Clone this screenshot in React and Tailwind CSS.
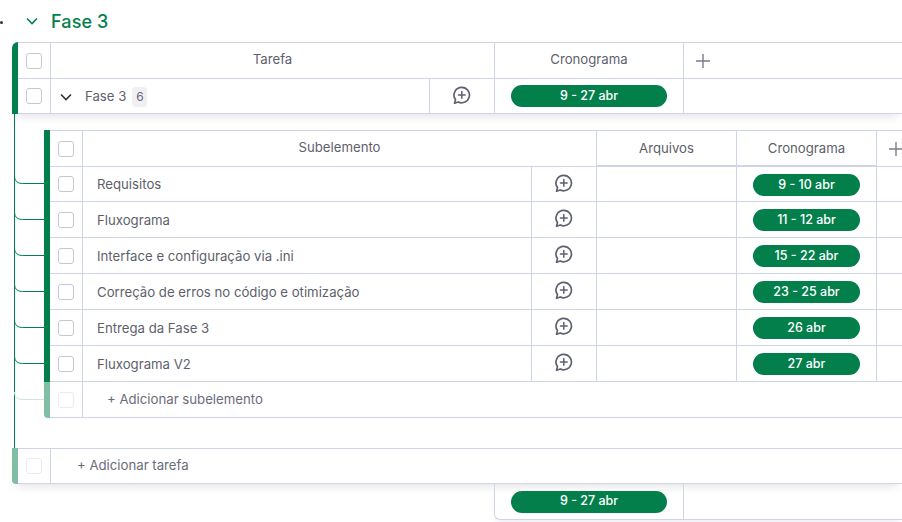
const font = { fontFamily: '"Inter", "Liberation Sans", sans-serif' };
const B = 'border-[#d0d4e7]';

function Check({ faded }) {
  return <span className={`block w-4 h-4 rounded-[3px] border ${faded ? 'border-[#e9ebf2]' : 'border-[#c5c7d6]'} bg-white`} />;
}
function CheckCell({ faded }) {
  return <div className={`w-[33px] shrink-0 flex items-center justify-center border-r ${B} pr-px`}><Check faded={faded} /></div>;
}
function Bubble() {
  return (
    <svg className="mr-[2px] mb-[2px]" width="19" height="19" viewBox="0 0 18 18" fill="none" stroke="#5f6070" strokeWidth="1.6" strokeLinecap="round" strokeLinejoin="round">
      <path d="M9.3 1.3a7.3 7.3 0 1 1 -3.4 13.8l-3.5 1.2 0.9 -3.4a7.3 7.3 0 0 1 6 -11.6z" />
      <path d="M9.3 5.3v6.4M6.1 8.5h6.4" strokeWidth="1.4" />
    </svg>
  );
}
function Plus({ size = 14 }) {
  return (
    <svg width={size} height={size} viewBox="0 0 14 14" stroke="#7b7c8a" strokeWidth="1.4"><path d="M7 0v14M0 7h14" /></svg>
  );
}
function Pill({ w, children }) {
  return <span className={`${w} h-[22px] rounded-full bg-[#037f4c] text-white text-[12.5px] font-medium flex items-center justify-center`}>{children}</span>;
}
function SubRow({ label, date, first }) {
  return (
    <div className={`flex ${first ? 'h-[35px]' : 'h-[36px]'} border-b ${B}`}>
      <CheckCell />
      <div className={`w-[449px] shrink-0 flex items-center pl-[14px] pt-[2px] text-[13.2px] text-[#5e5f6c] border-r ${B}`}>{label}</div>
      <div className={`w-[65px] shrink-0 flex items-center justify-center border-r ${B}`}><Bubble /></div>
      <div className={`w-[140px] shrink-0 border-r ${B}`} />
      <div className={`w-[140px] shrink-0 flex items-center justify-center border-r ${B} ${first ? 'pt-[2px]' : 'pt-px'}`}><Pill w="w-[107px]">{date}</Pill></div>
      <div className="flex-1" />
    </div>
  );
}
const rows = [
  ['Requisitos', '9 - 10 abr'],
  ['Fluxograma', '11 - 12 abr'],
  ['Interface e configuração via .ini', '15 - 22 abr'],
  ['Correção de erros no código e otimização', '23 - 25 abr'],
  ['Entrega da Fase 3', '26 abr'],
  ['Fluxograma V2', '27 abr'],
];

export default function App() {
  return (
    <div style={font} className="relative w-[902px] h-[522px] overflow-hidden bg-white flex flex-col">
      <svg className="absolute left-0 top-0" width="50" height="460" fill="none" stroke="#037f4c" strokeWidth="1">
        <path d="M14.5 113V448" />
        {[183, 219, 255, 291, 327, 363].map((y) => (
          <path key={y} d={`M14.5 ${y - 7}q0 7.5 8 7.5H44`} />
        ))}
        <path d="M14.5 392q0 7.5 8 7.5H44" stroke="#cfe5da" />
      </svg>

      <div className="h-[42px] shrink-0 flex items-center relative">
        <span className="absolute left-0 top-[21px] w-[3px] h-[3px] rounded-full bg-[#323338]" />
        <svg className="ml-[26px]" width="12" height="8" viewBox="0 0 12 8" fill="none" stroke="#037f4c" strokeWidth="1.6"><path d="M1 1.5l5 5 5-5" /></svg>
        <span className="ml-[13px] text-[18px] font-medium tracking-[0.1px] text-[#037f4c]">Fase 3</span>
      </div>

      <div className="ml-[12px] relative shadow-[0_6px_10px_-4px_rgba(0,0,0,0.12)]">
        <div className="border-l-[6px] border-[#037f4c] rounded-tl-[6px]">
          <div className={`flex h-[37px] border-y ${B} text-[13.2px] text-[#5e5f6c]`}>
            <CheckCell />
            <div className={`w-[444px] shrink-0 flex items-center justify-center border-r ${B} pb-[2px]`}>Tarefa</div>
            <div className={`w-[189px] shrink-0 flex items-center justify-center border-r ${B} pb-[2px]`}>Cronograma</div>
            <div className="flex-1 flex items-center pl-[12px]"><Plus /></div>
          </div>
          <div className={`flex h-[35px] border-b ${B}`}>
            <CheckCell />
            <div className={`w-[379px] shrink-0 flex items-center pt-[2px] border-r ${B}`}>
              <svg className="ml-[9px]" width="12" height="8" viewBox="0 0 12 8" fill="none" stroke="#323338" strokeWidth="1.6"><path d="M1 1.5l5 5 5-5" /></svg>
              <span className="ml-[13px] text-[13.2px] text-[#5e5f6c]">Fase 3</span>
              <span className="ml-[6px] w-[15px] h-[20px] rounded-[4px] bg-[#f0f0f2] text-[12px] text-[#676879] flex items-center justify-center">6</span>
            </div>
            <div className={`w-[65px] shrink-0 flex items-center justify-center border-r ${B}`}><Bubble /></div>
            <div className={`w-[189px] shrink-0 flex items-center justify-center border-r ${B}`}><Pill w="w-[156px]">9 - 27 abr</Pill></div>
            <div className="flex-1" />
          </div>
        </div>
      </div>

      <div className="ml-[44px] mt-[16px] relative">
        <div className="border-l-[6px] border-[#037f4c]">
          <div className={`flex h-[37px] border-y ${B} text-[13.2px] text-[#5e5f6c]`}>
            <CheckCell />
            <div className={`w-[514px] shrink-0 flex items-center justify-center border-r ${B} pb-[2px]`}>Subelemento</div>
            <div className={`w-[140px] shrink-0 flex items-center justify-center pt-[2px] border-r border-b-2 -mb-px ${B}`}>Arquivos</div>
            <div className={`w-[140px] shrink-0 flex items-center justify-center pt-[2px] border-r border-b-2 -mb-px ${B}`}>Cronograma</div>
            <div className="flex-1 flex items-center pl-[12px]"><Plus /></div>
          </div>
          {rows.map(([l, d], i) => <SubRow key={l} label={l} date={d} first={i === 0} />)}
        </div>
        <div className="flex h-[36px] border-l-[6px] border-[#80bfa5] rounded-bl-[4px]">
          <div className={`flex flex-1 border-b ${B}`}>
            <CheckCell faded />
            <div className="flex items-center pl-[24px] text-[13.2px] text-[#6b6c7b]">+ Adicionar subelemento</div>
          </div>
        </div>
      </div>

      <div className="ml-[12px] mt-[30px] shadow-[0_6px_10px_-4px_rgba(0,0,0,0.12)]">
        <div className="flex h-[36px] border-l-[6px] border-[#80bfa5] rounded-bl-[4px]">
          <div className={`flex flex-1 border-y ${B}`}>
            <CheckCell faded />
            <div className="flex items-center pl-[26px] text-[13.2px] text-[#6b6c7b]">+ Adicionar tarefa</div>
          </div>
        </div>
      </div>

      <div className={`ml-[494px] flex h-[36px] border-l border-b ${B} rounded-bl-[6px] shadow-[0_4px_6px_-3px_rgba(0,0,0,0.1)]`}>
        <div className={`w-[189px] shrink-0 flex items-center justify-center border-r ${B}`}><Pill w="w-[156px]">9 - 27 abr</Pill></div>
        <div className="flex-1" />
      </div>
    </div>
  );
}
